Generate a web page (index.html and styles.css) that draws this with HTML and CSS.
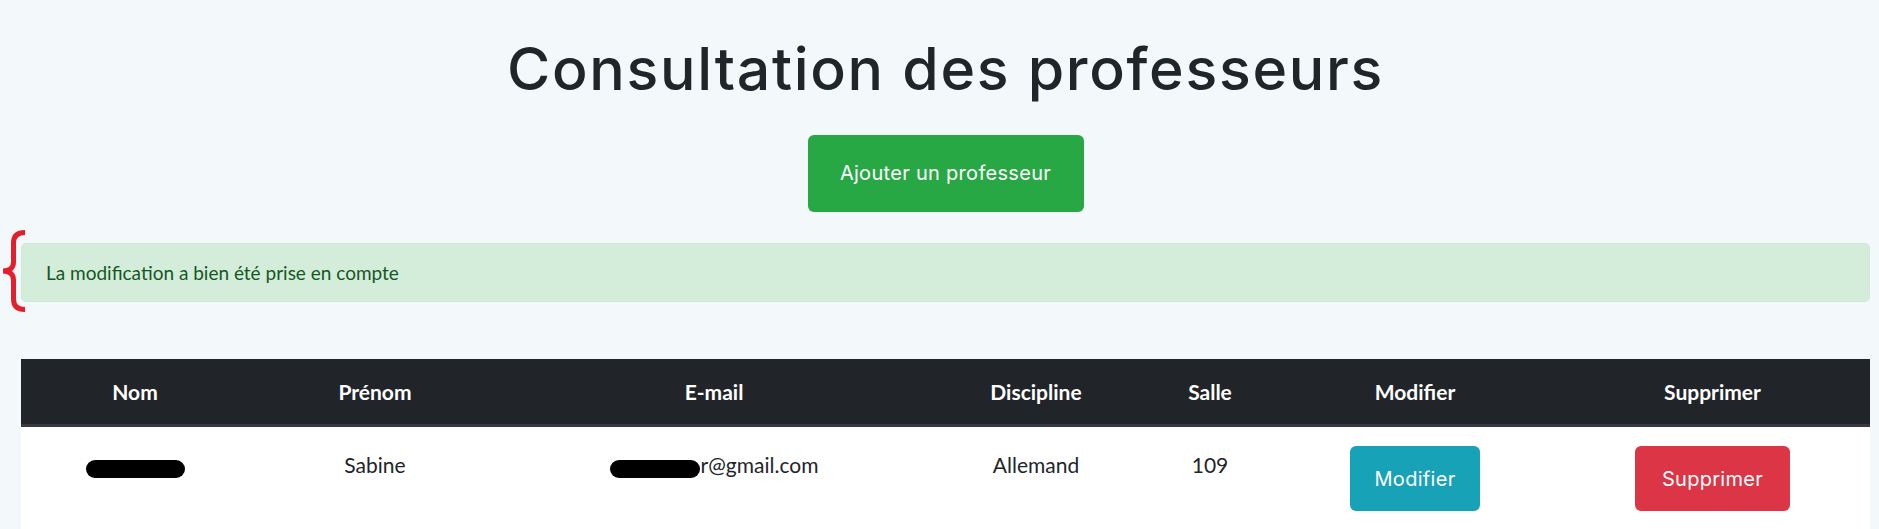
FILE: index.html
```html
<!DOCTYPE html>
<html lang="fr">
<head>
<meta charset="utf-8">
<title>Consultation des professeurs</title>
<link rel="stylesheet" href="styles.css">
</head>
<body>
<div class="page">
  <h1 class="title">Consultation des professeurs</h1>
  <div class="actions">
    <a class="btn btn-success btn-lg" href="#">Ajouter un professeur</a>
  </div>
  <div class="alert-wrap">
    <svg class="brace" width="28" height="84" viewBox="0 0 28 84" aria-hidden="true">
      <path d="M25 2.5 C17 2.5 13.5 6 13.5 13 L13.5 32 C13.5 38 9.5 41 3 41 C9.5 41 13.5 44 13.5 50 L13.5 69 C13.5 76 17 79.5 25 79.5" fill="none" stroke="#e41e2b" stroke-width="5" stroke-linecap="butt"/>
    </svg>
    <div class="alert">La modification a bien été prise en compte</div>
  </div>
  <table class="prof-table">
    <colgroup>
      <col class="c-nom"><col class="c-prenom"><col class="c-mail"><col class="c-disc"><col class="c-salle"><col class="c-mod"><col class="c-sup">
    </colgroup>
    <thead>
      <tr>
        <th>Nom</th>
        <th>Prénom</th>
        <th>E-mail</th>
        <th>Discipline</th>
        <th>Salle</th>
        <th>Modifier</th>
        <th>Supprimer</th>
      </tr>
    </thead>
    <tbody>
      <tr>
        <td><span class="redact redact-name" aria-label="nom masqué"></span></td>
        <td>Sabine</td>
        <td><span class="redact redact-mail" aria-label="masqué"></span>r@gmail.com</td>
        <td>Allemand</td>
        <td>109</td>
        <td><a class="btn btn-info" href="#">Modifier</a></td>
        <td><a class="btn btn-danger" href="#">Supprimer</a></td>
      </tr>
    </tbody>
  </table>
</div>
</body>
</html>
```
FILE: styles.css
```css
* { box-sizing: border-box; }

html, body {
  margin: 0;
  background: #f3f8fb;
}

body {
  font-family: "Lato", "Open Sans", sans-serif;
  color: #212529;
}

.page {
  padding: 34px 9px 0 21px;
  display: flex;
  flex-direction: column;
}

.title {
  margin: 0;
  font-family: "Inter", "Noto Sans", sans-serif;
  font-weight: 500;
  font-size: 59px;
  line-height: 1.2;
  text-align: center;
  color: #212529;
  letter-spacing: 1.7px;
}

.actions {
  display: flex;
  justify-content: center;
  margin-top: 30px;
}

.btn {
  display: inline-flex;
  align-items: center;
  justify-content: center;
  font-family: "Inter", "Noto Sans", sans-serif;
  font-weight: 400;
  color: #fff;
  text-decoration: none;
  border-radius: 6px;
  font-size: 20px;
  letter-spacing: 0.3px;
}

.btn-lg {
  height: 77px;
  width: 276px;
}

.btn-success { background: #28a745; }
.btn-info { background: #17a2b8; width: 130px; height: 65px; }
.btn-danger { background: #dc3545; width: 155px; height: 65px; }

.alert-wrap {
  position: relative;
  margin-top: 31px;
}

.brace {
  position: absolute;
  left: -21px;
  top: -13px;
}

.alert {
  height: 59px;
  display: flex;
  align-items: center;
  padding: 0 24px;
  background: #d4edda;
  border: 1px solid #cfe9d6;
  border-radius: 5px;
  color: #155724;
  font-size: 19px;
}

.prof-table {
  margin-top: 57px;
  width: 100%;
  border-collapse: collapse;
  table-layout: fixed;
  font-size: 21px;
}

.c-nom { width: 228px; }
.c-prenom { width: 252px; }
.c-mail { width: 426px; }
.c-disc { width: 218px; }
.c-salle { width: 130px; }
.c-mod { width: 280px; }
.c-sup { width: 315px; }

.prof-table th {
  background: #212529;
  color: #fff;
  font-weight: 700;
  height: 67px;
  border-bottom: 3px solid #343a40;
  text-align: center;
  vertical-align: middle;
  padding: 0;
}

.prof-table td {
  background: #fff;
  text-align: center;
  vertical-align: top;
  padding: 22px 0 20px;
  line-height: 1.5;
}

.prof-table td .btn { vertical-align: top; margin-top: -3px; }

.redact {
  display: inline-block;
  background: #000;
  border-radius: 9px;
  height: 18px;
}

.redact-name {
  width: 99px;
  vertical-align: -5px;
}

.redact-mail {
  width: 90px;
  vertical-align: -5px;
  margin-right: 1px;
}
```
